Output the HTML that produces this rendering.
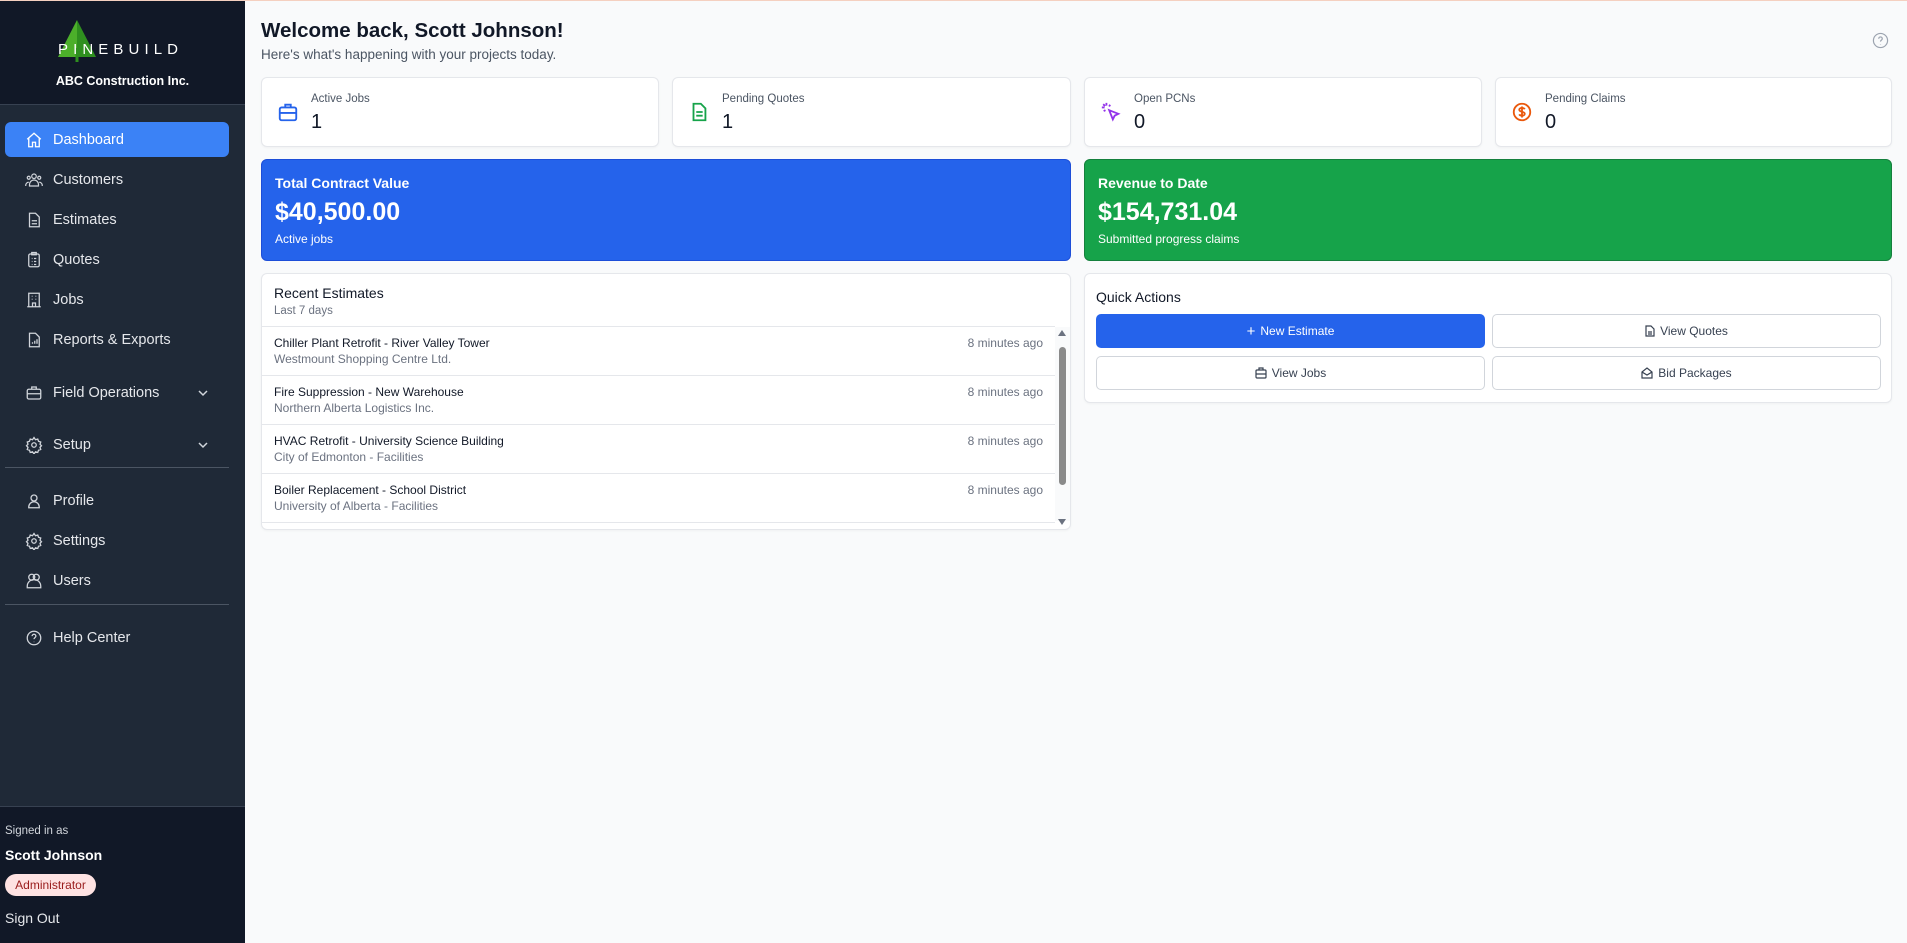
<!DOCTYPE html>
<html><head><meta charset="utf-8"><style>
*{box-sizing:border-box;margin:0;padding:0}
body{width:1907px;height:942px;overflow:hidden;font-family:"Liberation Sans",sans-serif;background:#f9fafb;position:relative;color:#111827}
.topline{position:absolute;left:0;top:0;width:1907px;height:1px;background:#f5d0c0}
.sb{position:absolute;left:0;top:1px;width:245px;height:941px;background:#1f2937}
.sbh{position:absolute;left:0;top:0;width:245px;height:104px;background:#111827;border-bottom:1px solid #374151}
.comp{position:absolute;top:73px;width:245px;text-align:center;color:#fff;font-size:12.5px;font-weight:bold}
.nav{position:absolute;left:5px;width:224px;height:35px;border-radius:6px;color:#e5e7eb;font-size:14.5px;display:flex;align-items:center}
.nav svg{position:absolute;left:20px;top:9px}
.nav span{position:absolute;left:48px}
.nav.act{background:#3b82f6;color:#fff}
.chev{position:absolute;left:192px!important;top:12px!important}
.div{position:absolute;left:5px;width:224px;height:1px;background:#4b5563}
.sbf{position:absolute;left:0;top:805px;width:245px;height:137px;background:#111827;border-top:1px solid #374151}
.card{position:absolute;background:#fff;border:1px solid #e5e7eb;border-radius:6px;box-shadow:0 1px 2px rgba(0,0,0,.04)}
.stat .lbl{position:absolute;left:49px;top:15px;font-size:11.5px;color:#4b5563}
.stat .num{position:absolute;left:49px;top:33px;font-size:20px;color:#111827}
.stat svg{position:absolute;left:15px;top:23px}
.big{position:absolute;border-radius:6px;color:#fff}
.big .t{position:absolute;left:13px;top:15px;font-size:14px;font-weight:bold}
.big .v{position:absolute;left:13px;top:38px;font-size:25px;font-weight:bold}
.big .s{position:absolute;left:13px;top:72px;font-size:12px}
.row{position:absolute;left:0;width:793px;height:49px;border-top:1px solid #e5e7eb}
.row .a{position:absolute;left:12px;top:9px;font-size:12px;color:#111827}
.row .b{position:absolute;left:12px;top:25px;font-size:12px;color:#6b7280}
.row .c{position:absolute;right:12px;top:9px;font-size:12px;color:#6b7280}
.btn{position:absolute;height:34px;width:389px;border-radius:5px;border:1px solid #d1d5db;background:#fff;font-size:12px;color:#374151;display:flex;align-items:center;justify-content:center;gap:5px}
</style></head><body>
<div class="topline"></div>
<div class="sb">
 <div class="sbh">
  <svg style="position:absolute;left:55px;top:17px" width="130" height="45" viewBox="0 0 130 45">
   <polygon points="22,2 3,39 22,39" fill="#4caf2a"/>
   <polygon points="22,2 41,39 22,39" fill="#2f8f1f"/>
   <rect x="20.5" y="30" width="3" height="14" fill="#2f8f1f"/>
   <text x="3" y="36" fill="#fff" font-family="Liberation Sans" font-size="15" textLength="120" lengthAdjust="spacing">PINEBUILD</text>
  </svg>
  <div class="comp">ABC Construction Inc.</div>
 </div>
 <div class="nav act" style="top:121px"><svg width="18" height="18" viewBox="0 0 24 24" fill="none" stroke="#fff" stroke-width="1.8"><path d="M3 11l9-8 9 8M5 9v12h5v-6h4v6h5V9"/></svg><span>Dashboard</span></div>
 <div class="nav" style="top:161px"><svg width="18" height="18" viewBox="0 0 24 24" fill="none" stroke="#d1d5db" stroke-width="1.6"><circle cx="12" cy="7" r="3"/><circle cx="5" cy="9" r="2"/><circle cx="19" cy="9" r="2"/><path d="M6 20v-2a6 6 0 0112 0v2zM1 20v-1a4 4 0 014-4M23 20v-1a4 4 0 00-4-4"/></svg><span>Customers</span></div>
 <div class="nav" style="top:201px"><svg width="18" height="18" viewBox="0 0 24 24" fill="none" stroke="#d1d5db" stroke-width="1.7"><path d="M6 3h8l5 5v13H6zM9 13h7M9 17h7"/></svg><span>Estimates</span></div>
 <div class="nav" style="top:241px"><svg width="18" height="18" viewBox="0 0 24 24" fill="none" stroke="#d1d5db" stroke-width="1.7"><rect x="5" y="4" width="14" height="17" rx="2"/><rect x="9" y="2" width="6" height="3"/><path d="M9 10h1M12 10h3M9 14h1M12 14h3M9 18h1M12 18h3"/></svg><span>Quotes</span></div>
 <div class="nav" style="top:281px"><svg width="18" height="18" viewBox="0 0 24 24" fill="none" stroke="#d1d5db" stroke-width="1.7"><path d="M5 21V3h14v18M3 21h18M9 7h1M14 7h1M9 11h1M14 11h1M10 21v-5h4v5"/></svg><span>Jobs</span></div>
 <div class="nav" style="top:321px"><svg width="18" height="18" viewBox="0 0 24 24" fill="none" stroke="#d1d5db" stroke-width="1.7"><path d="M6 3h8l5 5v13H6zM10 17v-2M13 17v-4M16 17v-6"/></svg><span>Reports &amp; Exports</span></div>
 <div class="nav" style="top:374px"><svg width="18" height="18" viewBox="0 0 24 24" fill="none" stroke="#d1d5db" stroke-width="1.7"><rect x="3" y="7" width="18" height="13" rx="2"/><path d="M9 7V4h6v3M3 13h18"/></svg><span>Field Operations</span><svg class="chev" width="12" height="12" viewBox="0 0 12 12" fill="none" stroke="#d1d5db" stroke-width="1.5"><path d="M2 4l4 4 4-4"/></svg></div>
 <div class="nav" style="top:426px"><svg width="18" height="18" viewBox="0 0 24 24" fill="none" stroke="#d1d5db" stroke-width="1.7"><circle cx="12" cy="12" r="3"/><path d="M12 2l2 3 3-1 1 3 3 1-1 3 2 2-2 2 1 3-3 1-1 3-3-1-2 3-2-3-3 1-1-3-3-1 1-3-2-2 2-2-1-3 3-1 1-3 3 1z"/></svg><span>Setup</span><svg class="chev" width="12" height="12" viewBox="0 0 12 12" fill="none" stroke="#d1d5db" stroke-width="1.5"><path d="M2 4l4 4 4-4"/></svg></div>
 <div class="div" style="top:466px"></div>
 <div class="nav" style="top:482px"><svg width="18" height="18" viewBox="0 0 24 24" fill="none" stroke="#d1d5db" stroke-width="1.7"><circle cx="12" cy="8" r="4"/><path d="M5 21v-1a7 7 0 0114 0v1z"/></svg><span>Profile</span></div>
 <div class="nav" style="top:522px"><svg width="18" height="18" viewBox="0 0 24 24" fill="none" stroke="#d1d5db" stroke-width="1.7"><circle cx="12" cy="12" r="3"/><path d="M12 2l2 3 3-1 1 3 3 1-1 3 2 2-2 2 1 3-3 1-1 3-3-1-2 3-2-3-3 1-1-3-3-1 1-3-2-2 2-2-1-3 3-1 1-3 3 1z"/></svg><span>Settings</span></div>
 <div class="nav" style="top:562px"><svg width="18" height="18" viewBox="0 0 24 24" fill="none" stroke="#d1d5db" stroke-width="1.7"><circle cx="9" cy="7" r="4"/><circle cx="15" cy="7" r="4"/><path d="M3 21v-2a6 6 0 0118 0v2z"/></svg><span>Users</span></div>
 <div class="div" style="top:603px"></div>
 <div class="nav" style="top:619px"><svg width="18" height="18" viewBox="0 0 24 24" fill="none" stroke="#d1d5db" stroke-width="1.7"><circle cx="12" cy="12" r="9"/><path d="M9.5 9.5a2.5 2.5 0 115 0c0 2-2.5 2-2.5 4M12 17v.5"/></svg><span>Help Center</span></div>
 <div class="sbf">
  <div style="position:absolute;left:5px;top:18px;font-size:11.5px;color:#d1d5db">Signed in as</div>
  <div style="position:absolute;left:5px;top:40px;font-size:14px;color:#fff;font-weight:bold">Scott Johnson</div>
  <div style="position:absolute;left:5px;top:67px;width:91px;height:22px;border-radius:11px;background:#fee2e2;color:#991b1b;font-size:12px;text-align:center;line-height:22px">Administrator</div>
  <div style="position:absolute;left:5px;top:103px;font-size:14px;color:#e5e7eb">Sign Out</div>
 </div>
</div>

<div style="position:absolute;left:261px;top:19px;font-size:20.5px;font-weight:bold;color:#111827">Welcome back, Scott Johnson!</div>
<div style="position:absolute;left:261px;top:47px;font-size:13.5px;color:#4b5563">Here's what's happening with your projects today.</div>
<svg style="position:absolute;left:1872px;top:32px" width="17" height="17" viewBox="0 0 24 24" fill="none" stroke="#9ca3af" stroke-width="1.7"><circle cx="12" cy="12" r="10"/><path d="M9.5 9.5a2.5 2.5 0 115 0c0 2-2.5 2-2.5 4M12 17v.5"/></svg>

<div class="card stat" style="left:261px;top:77px;width:398px;height:70px"><svg width="22" height="22" viewBox="0 0 24 24" fill="none" stroke="#2563eb" stroke-width="2"><rect x="3" y="7" width="18" height="14" rx="2"/><path d="M9 7V4h6v3M3 13h18M12 12v2"/></svg><div class="lbl">Active Jobs</div><div class="num">1</div></div>
<div class="card stat" style="left:672px;top:77px;width:399px;height:70px"><svg width="22" height="22" viewBox="0 0 24 24" fill="none" stroke="#16a34a" stroke-width="2"><path d="M6 3h8l5 5v13H6zM9 12h7M9 16h7"/></svg><div class="lbl">Pending Quotes</div><div class="num">1</div></div>
<div class="card stat" style="left:1084px;top:77px;width:398px;height:70px"><svg width="22" height="22" viewBox="0 0 24 24" fill="none" stroke="#9333ea" stroke-width="2"><path d="M10 10l10 4-4 2-2 4zM7 2v3M2 7h3M3.5 3.5l2 2M11 4l-1 2M4 11l2-1"/></svg><div class="lbl">Open PCNs</div><div class="num">0</div></div>
<div class="card stat" style="left:1495px;top:77px;width:397px;height:70px"><svg width="22" height="22" viewBox="0 0 24 24" fill="none" stroke="#ea580c" stroke-width="2"><circle cx="12" cy="12" r="9"/><path d="M15 9c-.5-1-1.5-1.5-3-1.5s-3 .8-3 2 1.5 1.8 3 2.2 3 1 3 2.3-1.5 2-3 2-2.5-.5-3-1.5M12 6v12"/></svg><div class="lbl">Pending Claims</div><div class="num">0</div></div>

<div class="big" style="left:261px;top:159px;width:810px;height:102px;background:#2563eb;border:1px solid #1d4ed8"><div class="t">Total Contract Value</div><div class="v">$40,500.00</div><div class="s">Active jobs</div></div>
<div class="big" style="left:1084px;top:159px;width:808px;height:102px;background:#16a34a;border:1px solid #15803d"><div class="t">Revenue to Date</div><div class="v">$154,731.04</div><div class="s">Submitted progress claims</div></div>

<div class="card" style="left:261px;top:273px;width:810px;height:257px;overflow:hidden">
 <div style="position:absolute;left:12px;top:11px;font-size:14px;color:#111827">Recent Estimates</div>
 <div style="position:absolute;left:12px;top:31px;font-size:11.5px;color:#6b7280">Last 7 days</div>
 <div class="row" style="top:52px"><div class="a">Chiller Plant Retrofit - River Valley Tower</div><div class="b">Westmount Shopping Centre Ltd.</div><div class="c">8 minutes ago</div></div>
 <div class="row" style="top:101px"><div class="a">Fire Suppression - New Warehouse</div><div class="b">Northern Alberta Logistics Inc.</div><div class="c">8 minutes ago</div></div>
 <div class="row" style="top:150px"><div class="a">HVAC Retrofit - University Science Building</div><div class="b">City of Edmonton - Facilities</div><div class="c">8 minutes ago</div></div>
 <div class="row" style="top:199px"><div class="a">Boiler Replacement - School District</div><div class="b">University of Alberta - Facilities</div><div class="c">8 minutes ago</div></div>
 <div class="row" style="top:248px"></div>
 <div style="position:absolute;right:0;top:53px;width:15px;height:194px;background:#f9fafb"></div>
 <div style="position:absolute;right:4px;top:56px;width:0;height:0;border-left:4px solid transparent;border-right:4px solid transparent;border-bottom:6px solid #6b7280"></div>
 <div style="position:absolute;right:4px;top:73px;width:7px;height:138px;border-radius:4px;background:#8a8a8a"></div>
 <div style="position:absolute;right:4px;top:245px;width:0;height:0;border-left:4px solid transparent;border-right:4px solid transparent;border-top:6px solid #6b7280"></div>
</div>

<div class="card" style="left:1084px;top:273px;width:808px;height:130px">
 <div style="position:absolute;left:11px;top:15px;font-size:14px;color:#111827">Quick Actions</div>
 <div class="btn" style="left:11px;top:40px;background:#2563eb;border-color:#2563eb;color:#fff"><span style="font-size:15px">+</span> New Estimate</div>
 <div class="btn" style="left:407px;top:40px"><svg width="10" height="12" viewBox="0 0 10 12" fill="none" stroke="#374151" stroke-width="1.2"><path d="M1 1h5l3 3v7H1zM3 7h4M3 9h4"/></svg> View Quotes</div>
 <div class="btn" style="left:11px;top:82px"><svg width="12" height="12" viewBox="0 0 12 12" fill="none" stroke="#374151" stroke-width="1.2"><rect x="1" y="3" width="10" height="8" rx="1"/><path d="M4 3V1h4v2M1 7h10"/></svg> View Jobs</div>
 <div class="btn" style="left:407px;top:82px"><svg width="12" height="12" viewBox="0 0 12 12" fill="none" stroke="#374151" stroke-width="1.2"><path d="M1 5l5-4 5 4v6H1zM1 5l5 3 5-3"/></svg> Bid Packages</div>
</div>
</body></html>
